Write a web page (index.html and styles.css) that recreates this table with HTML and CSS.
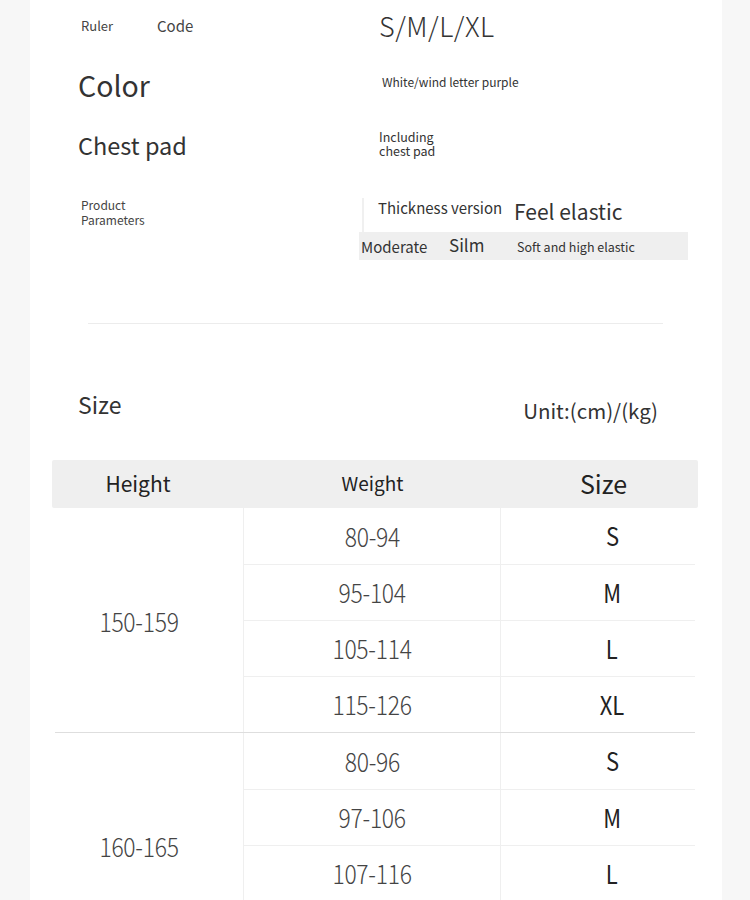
FILE: index.html
```html
<!DOCTYPE html>
<html>
<head>
<meta charset="utf-8">
<link rel="stylesheet" href="styles.css">
</head>
<body>
<div class="card">
  <section class="params">
    <div class="prow r1">
      <div class="lcol">
        <span class="ruler">Ruler</span>
        <span class="code">Code</span>
      </div>
      <div class="rcol"><span class="sizes">S/M/L/XL</span></div>
    </div>
    <div class="prow r2">
      <div class="lcol"><span class="color">Color</span></div>
      <div class="rcol"><span class="colorval">White/wind letter purple</span></div>
    </div>
    <div class="prow r3">
      <div class="lcol"><span class="chest">Chest pad</span></div>
      <div class="rcol"><span class="chestval">Including<br>chest pad</span></div>
    </div>
    <div class="prow r4">
      <div class="lcol"><span class="prod">Product<br>Parameters</span></div>
      <div class="pbox">
        <div class="ptop">
          <span class="thick">Thickness version</span>
          <span class="feel">Feel elastic</span>
        </div>
        <div class="pband">
          <span class="mod">Moderate</span>
          <span class="silm">Silm</span>
          <span class="soft">Soft and high elastic</span>
        </div>
      </div>
    </div>
  </section>

  <hr class="divider">

  <div class="sizehead">
    <span class="sizelabel"><span class="cond">Size</span></span>
    <span class="unit"><span class="cond">Unit:(cm)/(kg)</span></span>
  </div>

  <div class="table">
    <div class="thead">
      <div class="th th-h"><span class="cond">Height</span></div>
      <div class="th th-w"><span class="cond">Weight</span></div>
      <div class="th th-s"><span class="cond">Size</span></div>
    </div>
    <div class="group first">
      <div class="hcell"><span class="num">150-159</span></div>
      <div class="wcell"><span class="num">80-94</span></div><div class="scell"><span class="let">S</span></div>
      <div class="wcell line"><span class="num">95-104</span></div><div class="scell line"><span class="let">M</span></div>
      <div class="wcell line"><span class="num">105-114</span></div><div class="scell line"><span class="let">L</span></div>
      <div class="wcell line"><span class="num">115-126</span></div><div class="scell line"><span class="let">XL</span></div>
    </div>
    <div class="group">
      <div class="hcell"><span class="num">160-165</span></div>
      <div class="wcell"><span class="num">80-96</span></div><div class="scell"><span class="let">S</span></div>
      <div class="wcell line"><span class="num">97-106</span></div><div class="scell line"><span class="let">M</span></div>
      <div class="wcell line"><span class="num">107-116</span></div><div class="scell line"><span class="let">L</span></div>
      <div class="wcell line"><span class="num">117-126</span></div><div class="scell line"><span class="let">XL</span></div>
    </div>
  </div>
</div>
</body>
</html>
```

FILE: styles.css
```css
* { box-sizing: border-box; }
html, body {
  margin: 0;
  padding: 0;
  background: #f7f7f7;
  height: 900px;
  overflow: hidden;
}
body {
  font-family: "Noto Sans CJK SC", "Noto Sans", sans-serif;
  color: #333;
}
.card {
  margin-left: 30px;
  width: 692px;
  height: 1100px;
  background: #fff;
}

/* params */
.prow {
  display: flex;
  align-items: center;
}
.lcol {
  width: 329px;
  padding-left: 48px;
  display: flex;
  align-items: center;
}
.rcol {
  flex: 1;
  padding-left: 20px;
}
.r1 { height: 50px; }
.r2 { height: 66px; }
.r3 { height: 58px; }
.r4 { margin-top: 24px; align-items: flex-start; }

.ruler { font-size: 13px; margin-left: 3px; width: 76px; color: #444; }
.code { font-size: 15px; color: #444; }
.sizes { font-size: 27px; font-weight: 300; letter-spacing: 0.5px; color: #333; }
.color { font-size: 28.5px; color: #333; margin-top: 2px; }
.colorval { font-size: 12px; margin-left: 3px; color: #333; display: block; margin-top: -4px; }
.chest { font-size: 23.5px; color: #333; }
.chestval { font-size: 12.5px; line-height: 14px; display: block; color: #333; margin-top: -2px; }
.prod { font-size: 12px; line-height: 14.5px; margin-left: 3px; color: #444; }

.pbox {
  width: 329px;
}
.ptop {
  margin-left: 3px;
  height: 34px;
  border-left: 2px solid #f0f0f0;
  display: flex;
  align-items: flex-start;
  padding-left: 14px;
}
.thick { font-size: 15px; width: 136px; color: #333; line-height: 20px; }
.feel { font-size: 21px; color: #333; line-height: 26px; }
.pband {
  height: 28px;
  background: #efefef;
  display: flex;
  align-items: center;
  padding-left: 2px;
}
.mod { font-size: 15px; width: 88px; color: #333; }
.silm { font-size: 17px; width: 68px; color: #333; margin-top: -3px; }
.soft { font-size: 12.5px; color: #333; }

.divider {
  margin: 63px 0 0 58px;
  width: 575px;
  border: none;
  border-top: 1px solid #ececec;
  height: 0;
}

.cond, .num, .let {
  display: inline-block;
}
.sizehead {
  margin-top: 63px;
  padding: 0 64px 0 48px;
  display: flex;
  justify-content: space-between;
  align-items: flex-start;
  color: #333;
}
.sizelabel { font-size: 23px; }
.unit { font-size: 20.5px; margin-top: 8px; }

/* table */
.table {
  margin: 35px 0 0 22px;
  width: 646px;
}
.thead {
  display: grid;
  grid-template-columns: 192px 257px 197px;
  height: 48px;
  padding-bottom: 3px;
  background: #efefef;
  border-radius: 2px;
  align-items: center;
}
.th { text-align: center; color: #222; }
.th-h { font-size: 21px; padding-right: 20px; }
.th-w { font-size: 19px; }
.th-s { font-size: 25px; padding-left: 8px; }

.group {
  display: grid;
  grid-auto-rows: 56px;
  border-top: 1px solid #dedede;
  margin: 0 3px;
  grid-template-columns: 189px 257px 194px;
}
.group.first { border-top: none; }
.hcell {
  grid-row: span 4;
  display: flex;
  align-items: center;
  justify-content: center;
  padding-right: 20px;
  font-size: 26px;
  color: #444;
  border-right: 1px solid #efefef;
}
.wcell, .scell {
  display: flex;
  align-items: center;
  justify-content: center;
  padding-bottom: 2px;
  font-size: 26px;
  color: #444;
}
.num {
  font-weight: 300;
  transform: scaleX(0.88);
  letter-spacing: -0.3px;
}
.let {
  transform: scaleX(0.88);
}
.wcell { border-right: 1px solid #efefef; }
.scell { padding-left: 28px; color: #222; font-size: 25px; }
.line { border-top: 1px solid #efefef; }
```
